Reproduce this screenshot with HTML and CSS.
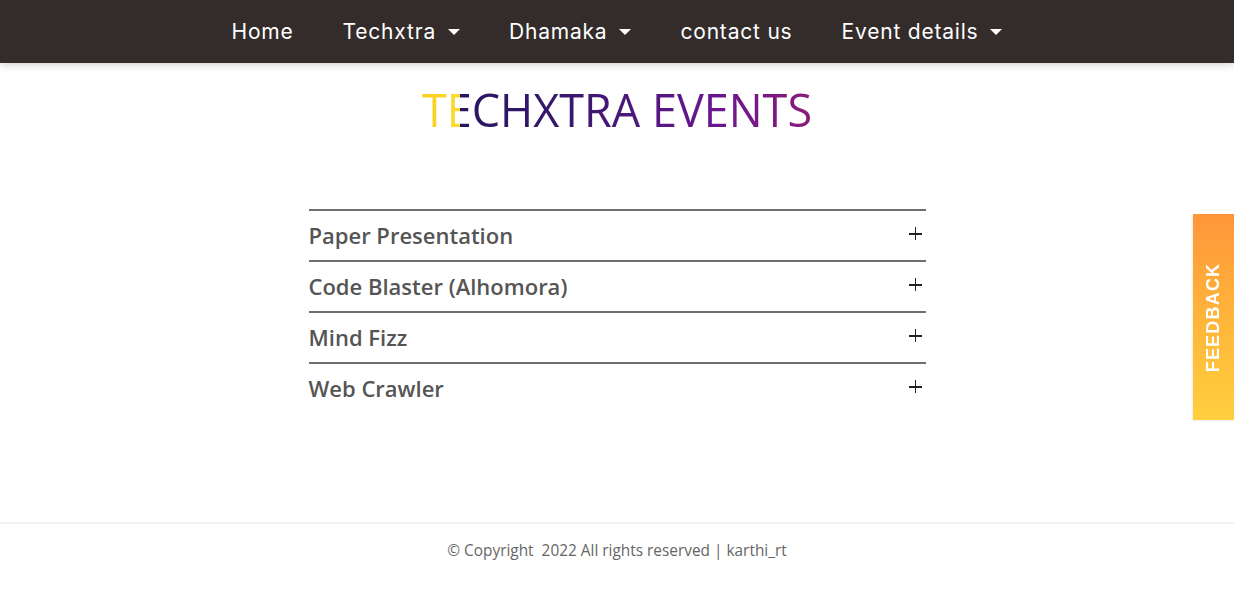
FILE: index.html
```html
<!DOCTYPE html>
<html lang="en">
<head>
<meta charset="utf-8">
<title>Techxtra Events</title>
<link rel="stylesheet" href="styles.css">
</head>
<body>
<nav class="navbar">
  <ul class="nav-list">
    <li class="nav-item"><a href="#">Home</a></li>
    <li class="nav-item"><a href="#" class="dropdown">Techxtra</a></li>
    <li class="nav-item"><a href="#" class="dropdown">Dhamaka</a></li>
    <li class="nav-item"><a href="#">contact us</a></li>
    <li class="nav-item"><a href="#" class="dropdown">Event details</a></li>
  </ul>
</nav>

<main class="main">
  <h1 class="title">TECHXTRA EVENTS</h1>
  <div class="accordion">
    <div class="acc-item"><span class="acc-title">Paper Presentation</span><span class="acc-plus"></span></div>
    <div class="acc-item"><span class="acc-title">Code Blaster (Alhomora)</span><span class="acc-plus"></span></div>
    <div class="acc-item"><span class="acc-title">Mind Fizz</span><span class="acc-plus"></span></div>
    <div class="acc-item"><span class="acc-title">Web Crawler</span><span class="acc-plus"></span></div>
  </div>
</main>

<footer class="footer">
  <p>© Copyright&nbsp; 2022 All rights reserved | karthi_rt</p>
</footer>

<a href="#" class="feedback"><span>FEEDBACK</span></a>
</body>
</html>
```

FILE: styles.css
```css
* { box-sizing: border-box; }
html, body { margin: 0; padding: 0; }
body {
  font-family: "Open Sans", "Noto Sans", sans-serif;
  background: #fff;
  color: #555;
}
.navbar {
  height: 63px;
  background: #332c2b;
  box-shadow: 0 2px 8px rgba(0,0,0,0.18);
  position: relative;
  z-index: 2;
}
.nav-list {
  list-style: none;
  margin: 0;
  padding: 0;
  height: 100%;
  display: flex;
  justify-content: center;
  align-items: center;
  gap: 49px;
}
.nav-item a {
  font-family: "Inter", "Lato", sans-serif;
  font-size: 21px;
  color: #fff;
  text-decoration: none;
  display: flex;
  align-items: center;
  letter-spacing: 0.8px;
}
.dropdown::after {
  content: "";
  display: inline-block;
  margin-left: 12px;
  border-left: 6px solid transparent;
  border-right: 6px solid transparent;
  border-top: 6px solid #fff;
}
.main {
  display: flex;
  flex-direction: column;
  align-items: center;
  min-height: 459px;
}
.title {
  margin: 19px 0 0;
  font-family: "Open Sans", sans-serif;
  font-weight: 500;
  font-size: 45px;
  line-height: 56px;
  background: linear-gradient(90deg, #fbcf1c 0%, #fbdc30 9.8%, #2a1660 9.8%, #3a1870 40%, #6a1690 75%, #8a1c78 100%);
  -webkit-background-clip: text;
  background-clip: text;
  color: transparent;
}
.accordion {
  width: 617px;
  margin-top: 71px;
}
.acc-item {
  height: 51px;
  border-top: 2px solid #6e6e6e;
  display: flex;
  justify-content: space-between;
  align-items: center;
  padding-bottom: 2px;
}
.acc-title {
  font-size: 22px;
  font-weight: 600;
  color: #555;
}
.acc-plus {
  width: 13px;
  height: 13px;
  margin-right: 4px;
  margin-bottom: 2px;
  position: relative;
}
.acc-plus::before, .acc-plus::after {
  content: "";
  position: absolute;
  background: #222;
}
.acc-plus::before { left: 0; right: 0; top: 6px; height: 1.5px; }
.acc-plus::after { top: 0; bottom: 0; left: 6px; width: 1.5px; }
.footer {
  border-top: 2px solid #f2f2f2;
  text-align: center;
  padding: 14px 0 18px;
}
.footer p {
  margin: 0;
  font-size: 15.4px;
  color: #666;
  line-height: 26px;
}
.feedback {
  position: fixed;
  right: 0;
  top: 214px;
  width: 41px;
  height: 206px;
  background: linear-gradient(180deg, #ff963a 0%, #ffb73a 55%, #ffcf3e 100%);
  display: flex;
  align-items: center;
  justify-content: center;
  text-decoration: none;
  box-shadow: -1px 1px 2px rgba(0,0,0,0.08);
}
.feedback span {
  transform: rotate(-90deg);
  font-family: "Liberation Sans", Arial, sans-serif;
  font-weight: 700;
  font-size: 18px;
  color: #fff;
  white-space: nowrap;
  letter-spacing: 1.2px;
}
```
